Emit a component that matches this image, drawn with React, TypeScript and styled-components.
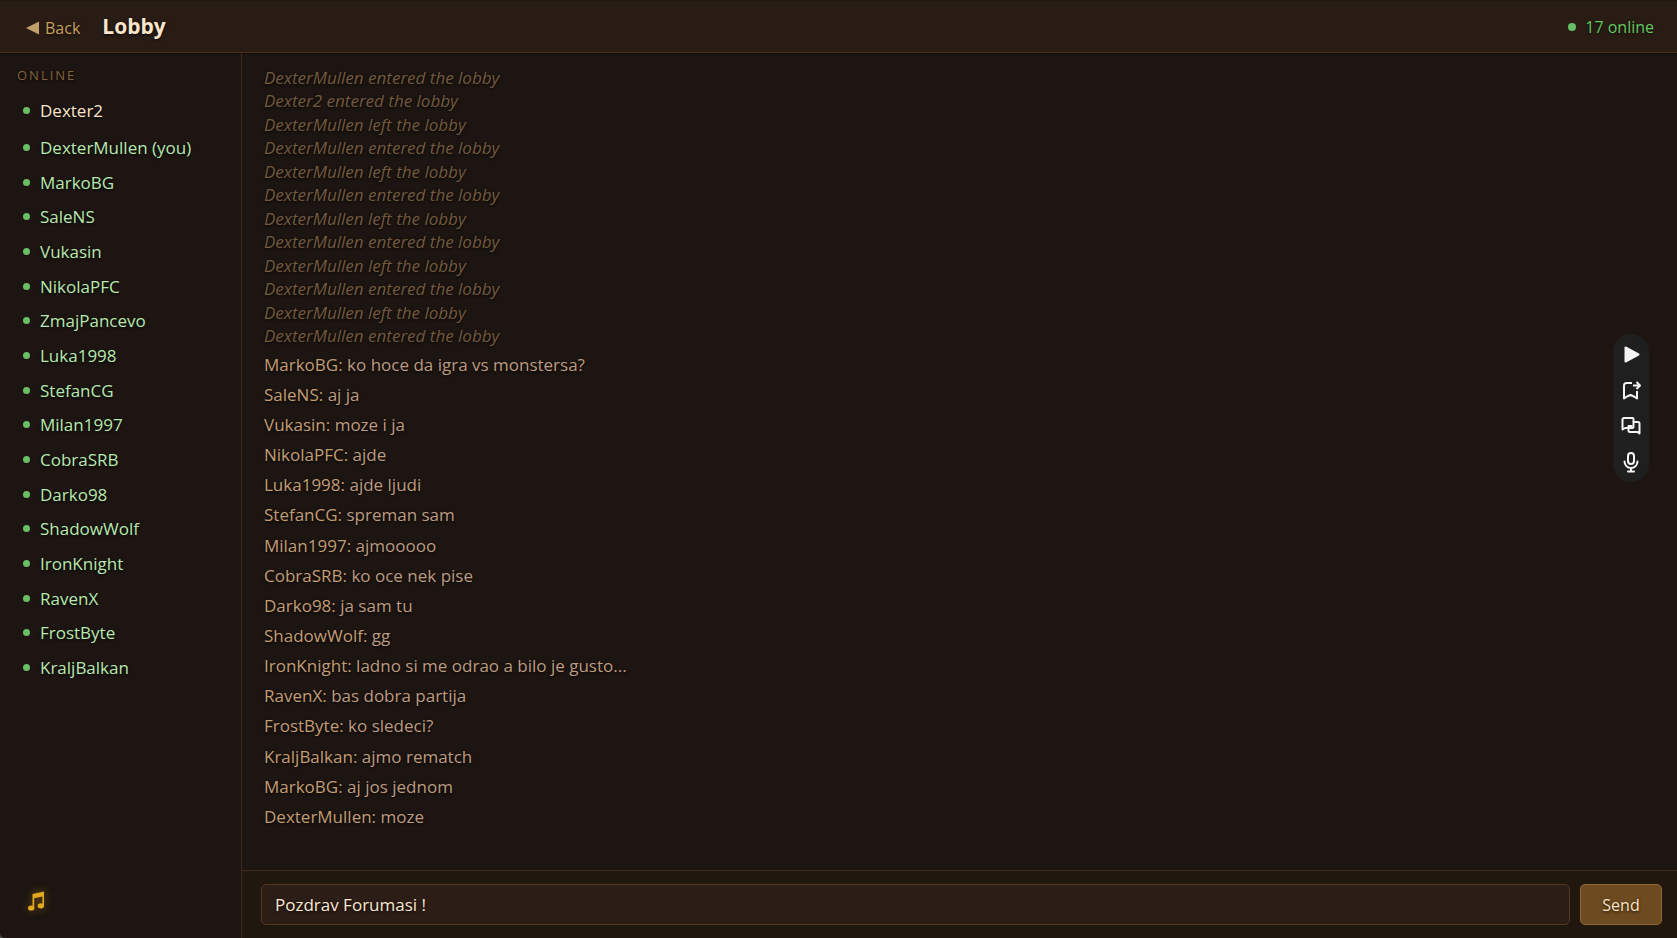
import React, { useState } from "react";
import styled, { createGlobalStyle } from "styled-components";

const GlobalStyle = createGlobalStyle`
  *, *::before, *::after { box-sizing: border-box; }
  html { background: #4a4644; }
  body { margin: 0; }
  body, button, input {
    font-family: "Trebuchet MS", "Open Sans", sans-serif;
    font-size: 17px;
  }
  ul, ol { list-style: none; margin: 0; padding: 0; }
`;

const Page = styled.div`
  display: flex;
  flex-direction: column;
  min-height: 100vh;
  overflow: hidden;
  color: #bd9b80;
  background: #1c1511;
  border-bottom-left-radius: 5px;
  text-shadow: 0 1px 3px rgba(0, 0, 0, 0.8);
`;

const Header = styled.header`
  display: flex;
  align-items: center;
  height: 53px;
  padding: 0 23px 0 26px;
  background: #291c15;
  border-top: 1px solid #1f1713;
  border-bottom: 1px solid #49301f;
  box-shadow: 0 1px 1px #120d0a;
`;

const BackButton = styled.button`
  display: flex;
  align-items: center;
  gap: 6px;
  margin: 2px 22px 0 0;
  padding: 0;
  border: 0;
  background: none;
  color: #cba05c;
  font-size: 16px;
  line-height: 24px;
  text-shadow: inherit;
  cursor: pointer;
`;

const Title = styled.h1`
  flex: 1;
  margin: 0;
  padding-bottom: 2px;
  color: #fbe6cc;
  font-size: 21px;
  line-height: 30px;
  font-weight: 700;
`;

const OnlineCount = styled.div`
  display: flex;
  align-items: center;
  gap: 9px;
  color: #65c95f;
  font-size: 16px;
  line-height: 24px;
`;

const Dot = styled.span<{ $size: number }>`
  flex: none;
  width: ${(p) => p.$size}px;
  height: ${(p) => p.$size}px;
  border-radius: 50%;
  background: #68bf66;
`;

const Body = styled.div`
  display: flex;
  flex: 1;
`;

const Sidebar = styled.aside`
  display: flex;
  flex-direction: column;
  flex: none;
  width: 242px;
  padding: 12px 17px 24px;
  border-right: 1px solid #3d2a1d;
`;

const SidebarTitle = styled.h2`
  margin: 0 0 8px;
  color: #84643f;
  font-size: 13px;
  line-height: 20px;
  font-weight: 400;
  letter-spacing: 2px;
`;

const Player = styled.li<{ $highlighted: boolean }>`
  display: flex;
  align-items: center;
  gap: 10px;
  height: 35px;
  padding-left: 6px;
  color: ${(p) => (p.$highlighted ? "#fde6cb" : "#b9e8ae")};

  &:nth-child(3n) { height: 34px; }
  &:first-child { margin-bottom: 2px; }
`;

const MusicButton = styled.button`
  display: flex;
  align-self: flex-start;
  margin: auto 0 0 8px;
  padding: 3px;
  border: 0;
  background: none;
  color: #e2a91f;
  filter: drop-shadow(0 0 4px rgba(226, 150, 20, 0.5));
  cursor: pointer;
`;

const Chat = styled.main`
  display: flex;
  flex-direction: column;
  flex: 1;
  min-width: 0;
`;

const Log = styled.div`
  display: flex;
  flex-direction: column;
  gap: 2px;
  flex: 1;
  padding: 13px 22px;
`;

const Notice = styled.li`
  color: #735a3e;
  font-style: italic;
  line-height: 23px;

  &:nth-child(even) { line-height: 24px; }
`;

const Message = styled.li`
  line-height: 30px;

  &:nth-child(7n) { line-height: 31px; }
`;

const Author = styled.span`
  color: #c29d74;
`;

const Composer = styled.form`
  display: flex;
  gap: 10px;
  padding: 13px 15px 13px 19px;
  background: #20170f;
  border-top: 1px solid #402b1c;
`;

const MessageInput = styled.input`
  flex: 1;
  min-width: 0;
  height: 41px;
  padding: 0 13px;
  border: 1px solid #53361f;
  border-radius: 5px;
  outline: none;
  background: #2c1d16;
  color: #fbe8d0;
  text-shadow: inherit;
`;

const SendButton = styled.button`
  width: 82px;
  height: 41px;
  padding: 0;
  border: 1px solid #92672f;
  border-radius: 5px;
  background: #6d4a20;
  color: #fbe3c2;
  font-size: 16px;
  text-shadow: inherit;
  cursor: pointer;
`;

const FloatingTools = styled.div`
  position: fixed;
  top: 334px;
  right: 28px;
  display: flex;
  flex-direction: column;
  align-items: center;
  gap: 12px;
  padding: 8px 6px;
  border-radius: 18px;
  background: #1f1f1f;
`;

const ToolButton = styled.button`
  display: flex;
  padding: 0;
  border: 0;
  background: none;
  color: #f4f4f4;
  cursor: pointer;

  svg {
    width: 24px;
    height: 24px;
    fill: none;
    stroke: currentColor;
    stroke-width: 2;
    stroke-linejoin: round;
  }
`;

const players = [
  "Dexter2", "DexterMullen (you)", "MarkoBG", "SaleNS", "Vukasin", "NikolaPFC",
  "ZmajPancevo", "Luka1998", "StefanCG", "Milan1997", "CobraSRB", "Darko98",
  "ShadowWolf", "IronKnight", "RavenX", "FrostByte", "KraljBalkan",
];

const notices = [
  "DexterMullen entered the lobby", "Dexter2 entered the lobby",
  "DexterMullen left the lobby", "DexterMullen entered the lobby",
  "DexterMullen left the lobby", "DexterMullen entered the lobby",
  "DexterMullen left the lobby", "DexterMullen entered the lobby",
  "DexterMullen left the lobby", "DexterMullen entered the lobby",
  "DexterMullen left the lobby", "DexterMullen entered the lobby",
];

const messages: [string, string][] = [
  ["MarkoBG", "ko hoce da igra vs monstersa?"],
  ["SaleNS", "aj ja"],
  ["Vukasin", "moze i ja"],
  ["NikolaPFC", "ajde"],
  ["Luka1998", "ajde ljudi"],
  ["StefanCG", "spreman sam"],
  ["Milan1997", "ajmooooo"],
  ["CobraSRB", "ko oce nek pise"],
  ["Darko98", "ja sam tu"],
  ["ShadowWolf", "gg"],
  ["IronKnight", "ladno si me odrao a bilo je gusto..."],
  ["RavenX", "bas dobra partija"],
  ["FrostByte", "ko sledeci?"],
  ["KraljBalkan", "ajmo rematch"],
  ["MarkoBG", "aj jos jednom"],
  ["DexterMullen", "moze"],
];

export default function App() {
  const [draft, setDraft] = useState("Pozdrav Forumasi !");

  return (
    <>
      <GlobalStyle />
      <Page>
        <Header>
          <BackButton type="button">
            <svg width="13" height="14" viewBox="0 0 13 14" aria-hidden="true">
              <path d="M0 7 13 0.5v13z" fill="#c3a069" />
            </svg>
            Back
          </BackButton>
          <Title>Lobby</Title>
          <OnlineCount><Dot $size={8} />17 online</OnlineCount>
        </Header>
        <Body>
          <Sidebar>
            <SidebarTitle>ONLINE</SidebarTitle>
            <ul>
              {players.map((name, i) => (
                <Player key={name} $highlighted={i === 0}><Dot $size={7} />{name}</Player>
              ))}
            </ul>
            <MusicButton type="button" aria-label="Toggle music">
              <svg width="16" height="20" viewBox="0 0 16 20" aria-hidden="true">
                <path d="M4.5 3 16 0.5V15h-1.6V5.6L6.2 7.3V17H4.5z" fill="currentColor" />
                <ellipse cx="3.2" cy="17" rx="3.2" ry="2.6" fill="currentColor" />
                <ellipse cx="12.8" cy="14.8" rx="3.2" ry="2.6" fill="currentColor" />
              </svg>
            </MusicButton>
          </Sidebar>
          <Chat>
            <Log>
              <ol>
                {notices.map((text, i) => <Notice key={i}>{text}</Notice>)}
              </ol>
              <ol>
                {messages.map(([author, text], i) => (
                  <Message key={i}><Author>{author}:</Author> {text}</Message>
                ))}
              </ol>
            </Log>
            <Composer onSubmit={(e) => e.preventDefault()}>
              <MessageInput
                aria-label="Message"
                value={draft}
                onChange={(e) => setDraft(e.target.value)}
              />
              <SendButton type="submit">Send</SendButton>
            </Composer>
          </Chat>
        </Body>
      </Page>
      <FloatingTools>
        <ToolButton type="button" aria-label="Play">
          <svg viewBox="0 0 24 24">
            <path d="M6.500 5.500v14L19.500 12.500z" fill="currentColor" />
          </svg>
        </ToolButton>
        <ToolButton type="button" aria-label="Save bookmark">
          <svg viewBox="0 0 24 24">
            <path d="M13 5H7.500Q5 5 5 7.500V20.500l3-2 3.500-1.500 3.500 1.500 3 2V13" />
            <path d="M14 7.500h7M17.500 4l3.500 3.500-3.500 3.500" />
          </svg>
        </ToolButton>
        <ToolButton type="button" aria-label="Translate">
          <svg viewBox="0 0 24 24">
            <path d="M5 4h8.500q1 0 1 1v8q0 1-1 1H6l-2.500 1.500V5.500Q3.500 4 5 4z" />
            <path d="M14.500 8H19q1.500 0 1.500 1.500V19.500l-2-1.500H11q-1.500 0-1.500-1.500V12h4" />
          </svg>
        </ToolButton>
        <ToolButton type="button" aria-label="Voice">
          <svg viewBox="0 0 24 24" strokeLinecap="round">
            <rect x="9" y="3" width="6" height="11" rx="3" />
            <path d="M5.500 11.500a6.500 6.500 0 0 0 13 0M12 18v3.500M9 21.500h6" />
          </svg>
        </ToolButton>
      </FloatingTools>
    </>
  );
}
